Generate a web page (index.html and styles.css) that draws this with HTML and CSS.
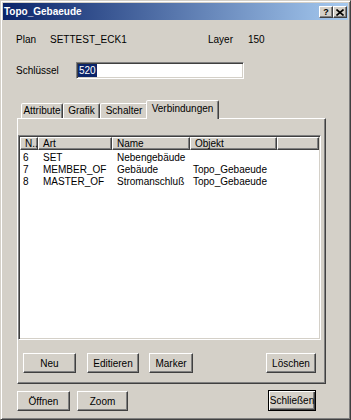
FILE: index.html
```html
<!DOCTYPE html>
<html lang="de">
<head>
  <meta charset="UTF-8" />
  <title>Topo_Gebaeude</title>
  <link rel="stylesheet" href="styles.css">
</head>
<body>
  <div class="window">
    <div class="titlebar">
      <span class="title">Topo_Gebaeude</span>
      <div class="caption-btns">
        <span class="cap-btn cap-help">?</span>
        <span class="cap-btn cap-close">
          <svg width="8" height="7" viewBox="0 0 8 7"><path d="M0.5 0.5 L7.5 6.5 M7.5 0.5 L0.5 6.5" stroke="#000" stroke-width="1.6" fill="none"/></svg>
        </span>
      </div>
    </div>

    <div class="client">
      <div class="info-row">
        <span class="info-plan">Plan</span>
        <span class="info-plan-val">SETTEST_ECK1</span>
        <span class="info-layer">Layer</span>
        <span>150</span>
      </div>

      <div class="key-row">
        <label for="key">Schlüssel</label>
        <div class="edit" id="key"><span class="sel">520</span></div>
      </div>

      <div class="tabs">
        <div class="tab tab-attr">Attribute</div>
        <div class="tab tab-grafik">Grafik</div>
        <div class="tab tab-schalter">Schalter</div>
        <div class="tab tab-active">Verbindungen</div>
      </div>

      <div class="panel">
        <div class="list">
          <div class="list-head">
            <div class="hcell col-n">N..</div>
            <div class="hcell col-art">Art</div>
            <div class="hcell col-name">Name</div>
            <div class="hcell col-obj">Objekt</div>
            <div class="hcell col-fill"></div>
          </div>
          <div class="list-body">
            <div class="row">
              <span class="col-n">6</span><span class="col-art">SET</span><span class="col-name">Nebengebäude</span><span class="col-obj"></span>
            </div>
            <div class="row">
              <span class="col-n">7</span><span class="col-art">MEMBER_OF</span><span class="col-name">Gebäude</span><span class="col-obj">Topo_Gebaeude</span>
            </div>
            <div class="row">
              <span class="col-n">8</span><span class="col-art">MASTER_OF</span><span class="col-name">Stromanschluß</span><span class="col-obj">Topo_Gebaeude</span>
            </div>
          </div>
        </div>

        <div class="panel-btns">
          <button class="btn btn-neu">Neu</button>
          <button class="btn btn-edit">Editieren</button>
          <button class="btn btn-marker">Marker</button>
          <button class="btn btn-del">Löschen</button>
        </div>
      </div>

      <div class="footer">
        <button class="btn btn-open">Öffnen</button>
        <button class="btn btn-zoom">Zoom</button>
        <button class="btn btn-close">Schließen</button>
      </div>
    </div>
  </div>
</body>
</html>
```

FILE: styles.css
```css
* {
  box-sizing: border-box;
}
body {
  margin: 0;
  background: #d4d0c8;
  font-family: "Liberation Sans", Arial, sans-serif;
  font-size: 10px;
  color: #000;
}
.window {
  width: 351px;
  height: 420px;
  background: #d4d0c8;
  border: 1px solid;
  border-color: #d4d0c8 #404040 #404040 #d4d0c8;
  box-shadow: inset 1px 1px #fff, inset -1px -1px #808080;
  padding: 2px;
}

/* title bar */
.titlebar {
  height: 17px;
  background: linear-gradient(to right, #0a246a, #a6caf0);
  display: flex;
  align-items: center;
  padding: 0 1px 0 1px;
}
.title {
  flex: 1;
  color: #fff;
  font-weight: bold;
}
.caption-btns {
  display: flex;
  margin-top: 1px;
}
.cap-btn {
  width: 14px;
  height: 12px;
  background: #d4d0c8;
  border: 1px solid;
  border-color: #fff #404040 #404040 #fff;
  box-shadow: inset -1px -1px #808080;
  display: flex;
  align-items: center;
  justify-content: center;
  font-weight: bold;
  font-size: 9px;
  line-height: 10px;
}

/* header fields */
.client {
  padding-left: 13px;
}
.info-row {
  display: flex;
  margin-top: 14px;
  line-height: 12px;
}
.info-plan { width: 34px; }
.info-plan-val { width: 158px; }
.info-layer { width: 40px; }

.key-row {
  display: flex;
  align-items: center;
  margin-top: 16px;
}
.key-row label {
  width: 60px;
}
.edit {
  width: 168px;
  height: 17px;
  background: #fff;
  border: 1px solid;
  border-color: #808080 #fff #fff #808080;
  box-shadow: inset 1px 1px #404040, inset -1px -1px #d4d0c8;
  padding: 1px 0 0 1px;
}
.sel {
  display: inline-block;
  height: 13px;
  line-height: 13px;
  padding: 0 1px;
  background: #0a246a;
  color: #fff;
}

/* tabs */
.tabs {
  display: flex;
  align-items: flex-end;
  height: 18px;
  margin-top: 21px;
  padding-left: 5px;
}
.tab {
  height: 15px;
  border: 1px solid;
  border-bottom: none;
  border-color: #fff #404040 transparent #fff;
  border-radius: 2px 2px 0 0;
  box-shadow: inset -1px 0 #808080;
  text-align: center;
  line-height: 13px;
  background: #d4d0c8;
}
.tab-attr { width: 42px; }
.tab-grafik { width: 37px; }
.tab-schalter { width: 48px; }
.tab-active {
  width: 73px;
  height: 19px;
  margin: 0 0 -1px -2px;
  line-height: 15px;
  position: relative;
  z-index: 1;
}

.panel {
  width: 309px;
  height: 266px;
  margin-left: 1px;
  border: 1px solid;
  border-color: #fff #404040 #404040 #fff;
  box-shadow: inset -1px -1px #808080;
  padding-top: 16px;
}

/* list view */
.list {
  width: 303px;
  height: 205px;
  background: #fff;
  border: 1px solid;
  border-color: #808080 #fff #fff #808080;
  box-shadow: inset 1px 1px #404040, inset -1px -1px #d4d0c8;
  padding: 1px;
}
.list-head {
  display: flex;
  height: 13px;
}
.hcell {
  background: #d4d0c8;
  border: 1px solid;
  border-color: #fff #404040 #404040 #fff;
  box-shadow: inset -1px -1px #808080;
  padding-left: 4px;
  line-height: 11px;
}
.col-n { width: 18px; }
.col-art { width: 74px; }
.col-name { width: 78px; }
.col-obj { width: 87px; }
.col-fill { flex: 1; }
.list-body {
  padding-top: 2px;
}
.row {
  display: flex;
  line-height: 12px;
}
.row span {
  padding-left: 5px;
  white-space: nowrap;
}
.row .col-n,
.row .col-obj {
  padding-left: 3px;
}

/* buttons */
.btn {
  height: 20px;
  padding: 0;
  font: inherit;
  color: #000;
  background: #d4d0c8;
  border: 1px solid;
  border-color: #fff #404040 #404040 #fff;
  box-shadow: inset -1px -1px #808080;
  display: flex;
  align-items: center;
  justify-content: center;
}
.panel-btns {
  display: flex;
  margin-top: 13px;
  padding: 0 9px 0 5px;
}
.btn-neu { width: 53px; }
.btn-edit { width: 52px; margin-left: 11px; }
.btn-marker { width: 44px; margin-left: 10px; }
.btn-del { width: 50px; margin-left: auto; }

.footer {
  display: flex;
  align-items: flex-start;
  margin-top: 7px;
  padding-left: 1px;
}
.btn-open { width: 53px; }
.btn-zoom { width: 51px; margin-left: 7px; }
.btn-close {
  width: 48px;
  height: 21px;
  margin: -1px 32px 0 auto;
  border-color: #000;
  box-shadow: inset 1px 1px #fff, inset -1px -1px #404040, inset -2px -2px #808080;
}
```
